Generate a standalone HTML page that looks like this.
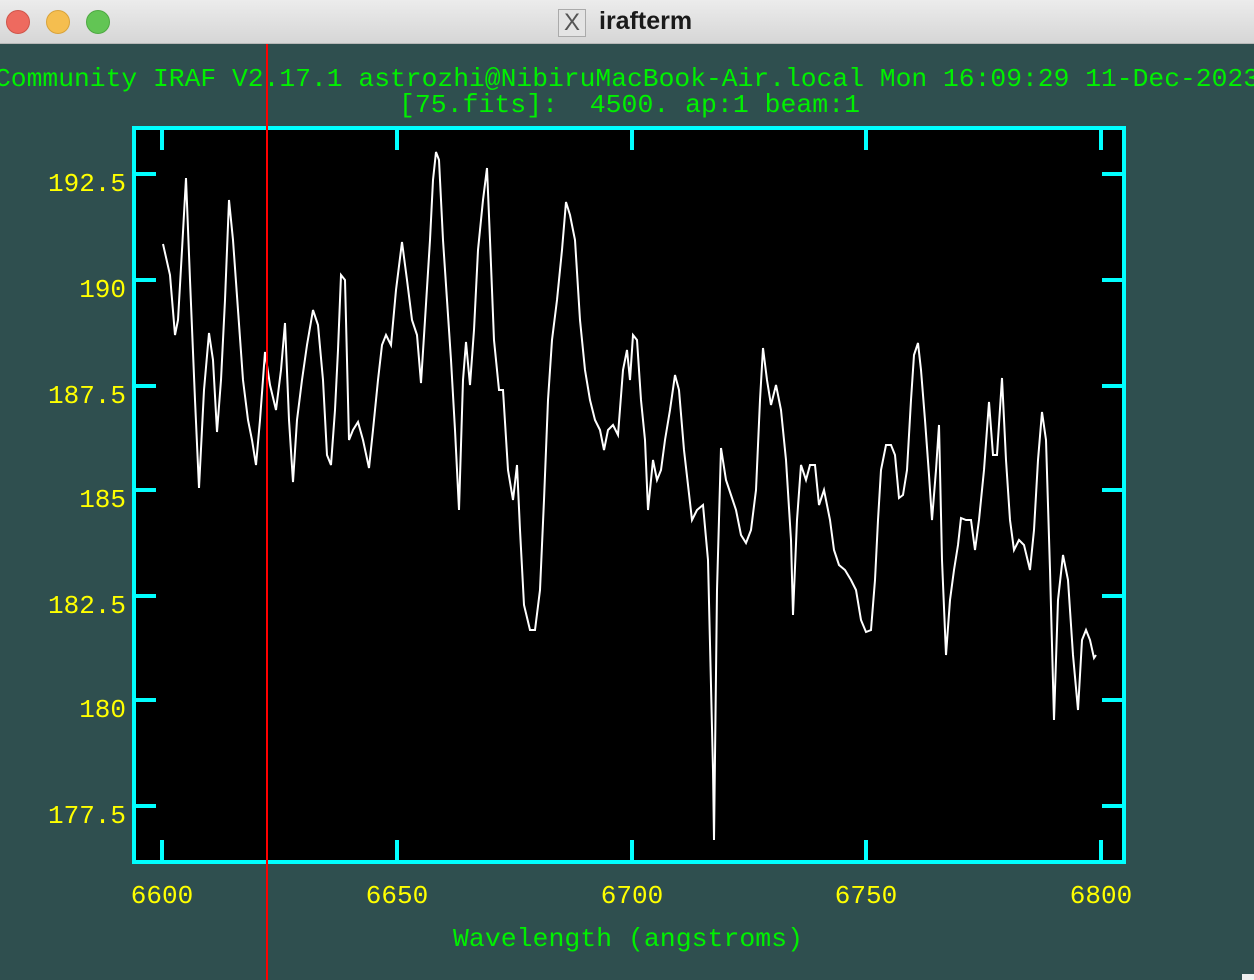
<!DOCTYPE html>
<html><head><meta charset="utf-8"><style>
html,body{margin:0;padding:0;width:1254px;height:980px;overflow:hidden;background:#2f4f4f}
.tb{position:absolute;left:0;top:0;width:1254px;height:43px;background:linear-gradient(#ececec,#d6d6d6);border-bottom:1px solid #b8b8b8}
.dot{position:absolute;top:10px;width:24px;height:24px;border-radius:50%}
svg text{white-space:pre}
</style></head><body>
<div class="tb">
<div class="dot" style="left:6px;background:#ee6a5f;border:1px solid #d0554a;width:22px;height:22px"></div>
<div class="dot" style="left:46px;background:#f5be4f;border:1px solid #d9a33a;width:22px;height:22px"></div>
<div class="dot" style="left:86px;background:#62c554;border:1px solid #4ea942;width:22px;height:22px"></div>
<div style="position:absolute;left:558px;top:9px;width:26px;height:26px;background:#e4e4e4;border:1px solid #aaa;font:24px 'Liberation Sans',sans-serif;color:#555;text-align:center;line-height:26px">X</div>
<div style="position:absolute;left:599px;top:7px;font:bold 25px 'Liberation Sans',sans-serif;color:#1a1a1a">irafterm</div>
</div>
<svg width="1254" height="980" style="position:absolute;left:0;top:0" xmlns="http://www.w3.org/2000/svg" xml:space="preserve">
<g font-family="Liberation Mono, monospace" font-size="26">
<text x="-5" y="86" fill="#00f000" textLength="1264" lengthAdjust="spacingAndGlyphs">Community IRAF V2.17.1 astrozhi@NibiruMacBook-Air.local Mon 16:09:29 11-Dec-2023</text>
<text x="399" y="112" fill="#00f000" textLength="461" lengthAdjust="spacingAndGlyphs">[75.fits]:  4500. ap:1 beam:1</text>
<text x="453" y="946" fill="#00f000" textLength="350" lengthAdjust="spacingAndGlyphs">Wavelength (angstroms)</text>
<g fill="#ffff00" text-anchor="end">
<text x="126" y="191">192.5</text><text x="126" y="297">190</text><text x="126" y="403">187.5</text>
<text x="126" y="507">185</text><text x="126" y="613">182.5</text><text x="126" y="717">180</text><text x="126" y="823">177.5</text>
</g>
<g fill="#ffff00" text-anchor="middle">
<text x="162" y="903">6600</text><text x="397" y="903">6650</text><text x="632" y="903">6700</text><text x="866" y="903">6750</text><text x="1101" y="903">6800</text>
</g>
</g>
<rect x="134" y="128" width="990" height="734" fill="#000" stroke="#00ffff" stroke-width="4"/>
<g stroke="#00ffff" stroke-width="4">
<path d="M162 130V150M397 130V150M632 130V150M866 130V150M1101 130V150M162 860V840M397 860V840M632 860V840M866 860V840M1101 860V840"/>
<path d="M136 174H156M136 280H156M136 386H156M136 490H156M136 596H156M136 700H156M136 806H156M1122 174H1102M1122 280H1102M1122 386H1102M1122 490H1102M1122 596H1102M1122 700H1102M1122 806H1102"/>
</g>
<polyline fill="none" stroke="#fff" stroke-width="2" points="163,244 170,275 175,335 178,320 182,250 186,178 190,280 195,400 199,488 204,390 209,333 213,360 217,432 221,380 225,300 229,200 233,240 238,310 243,380 248,420 252,440 256,465 260,420 265,352 270,385 276,410 281,370 285,323 289,420 293,482 297,420 302,380 307,345 313,310 318,325 323,380 327,455 331,465 335,410 338,350 341,275 345,280 349,440 353,430 358,422 363,440 369,468 373,430 378,380 382,345 386,335 391,345 396,290 402,242 407,280 412,320 417,335 421,383 425,320 430,240 433,180 436,152 439,160 443,240 447,300 451,360 455,430 459,510 463,380 466,342 470,385 474,330 478,250 483,200 487,168 490,240 494,340 499,390 503,390 508,470 513,500 517,465 520,530 524,605 530,630 535,630 540,590 544,500 548,400 552,340 557,300 562,250 566,202 570,215 575,240 580,320 585,370 590,400 595,420 600,430 604,450 608,430 613,425 618,435 623,370 627,350 630,380 633,335 637,340 641,400 645,440 648,510 653,460 657,480 661,470 665,440 670,410 675,375 679,390 684,450 688,485 692,520 697,510 703,505 708,560 713,770 714,840 717,590 721,448 726,480 731,495 736,510 741,535 746,543 751,530 756,490 760,400 763,348 767,380 771,405 776,385 781,410 786,460 791,540 793,615 797,520 801,465 806,480 810,465 815,465 819,505 824,490 830,520 834,550 839,565 845,570 851,580 856,590 861,620 866,632 871,630 875,580 878,520 881,470 886,445 891,445 895,455 899,498 903,495 907,470 911,400 914,355 918,343 921,370 925,420 929,475 932,520 936,470 939,425 942,560 946,655 950,600 954,570 958,545 961,518 966,520 971,520 975,550 979,520 984,470 989,402 993,455 997,455 1002,378 1006,460 1010,520 1014,550 1019,540 1024,545 1030,570 1034,530 1038,460 1042,412 1046,440 1050,570 1054,720 1058,600 1063,555 1068,580 1073,655 1078,710 1082,640 1086,630 1090,640 1094,658 1096,655"/>
<rect x="266" y="44" width="2" height="936" fill="#ff0000"/>
<rect x="1242" y="974" width="12" height="6" fill="#eee"/>
</svg>
</body></html>
